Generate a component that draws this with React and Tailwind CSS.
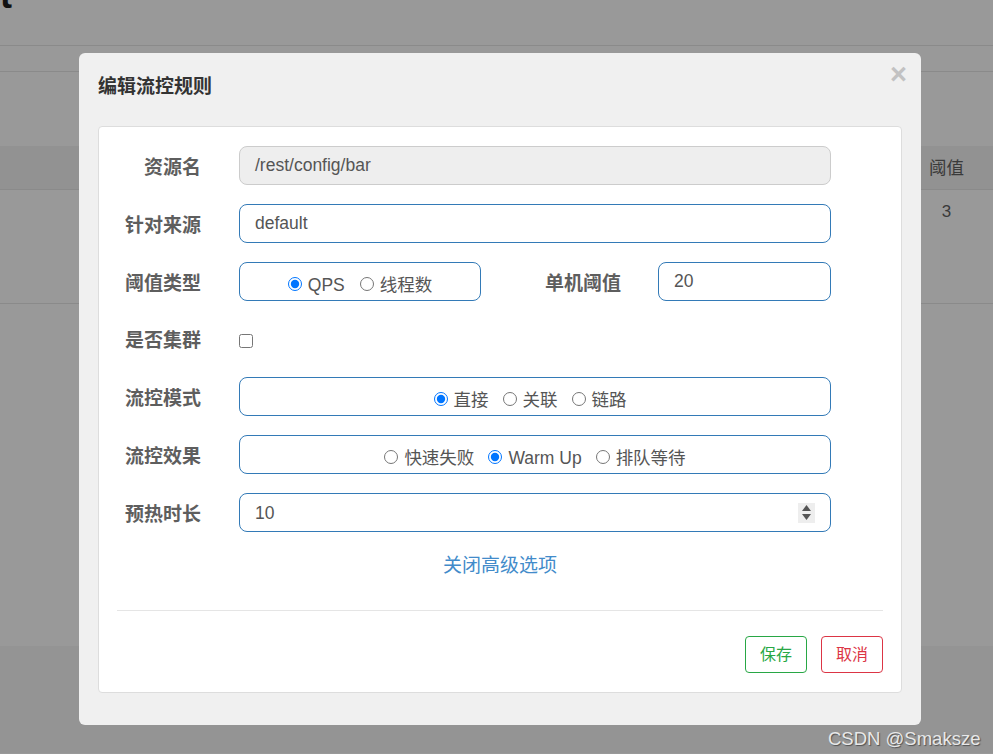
import React from "react";

const font = { fontFamily: '"Liberation Sans","Noto Sans CJK SC",sans-serif' };

function Radio({ checked, label }) {
  return (
    <label className="mt-[4px] flex items-center">
      <input type="radio" defaultChecked={checked} className="m-0 h-[14px] w-[14px]" />
      <span className="ml-[6px] mt-[3px] text-[17.5px] text-[#555]">{label}</span>
    </label>
  );
}

function Label({ children, w = "w-[102px]" }) {
  return (
    <div className={`${w} mt-[5px] shrink-0 text-right text-[19px] font-bold text-[#5e5e5e]`}>{children}</div>
  );
}

export default function App() {
  return (
    <div className="relative h-[754px] w-[993px] overflow-hidden bg-[#999999]" style={font}>
      {/* background page */}
      <div className="h-[45px] overflow-hidden">
        <div className="mt-[-22px] text-[36px] font-bold leading-[36px] text-[#111]">t</div>
      </div>
      <div className="h-[26px] border-t border-[#8a8a8a]" />
      <div className="h-[75px] border-t border-[#8a8a8a]" />
      <div className="flex h-[43px] items-center justify-end bg-[#929292]">
        <div className="w-[93px] pt-[2px] text-center text-[17.5px] text-[#3a3a3a]">阈值</div>
      </div>
      <div className="flex h-[114px] justify-end border-t border-[#8a8a8a]">
        <div className="w-[93px] pt-[9px] text-center text-[17px] text-[#3a3a3a]">3</div>
      </div>
      <div className="h-[343px] border-t border-[#8a8a8a]" />
      <div className="h-[107px] bg-[#949494]" />

      {/* modal */}
      <div className="absolute left-[79px] top-[53px] w-[842px] rounded-[6px] bg-[#f0f0f0] px-[19px] pb-[32px]">
        <div className="flex h-[73px] items-start justify-between pt-[8px]">
          <div className="mt-[15px] text-[19px] font-bold leading-[22px] text-[#333]">编辑流控规则</div>
          <div className="mr-[-5px] text-[29px] font-bold leading-[26px] text-[#c2c2c2]">×</div>
        </div>
        <div className="rounded-[4px] border border-[#dddddd] bg-white pt-[19px] pb-[19px]">
          <div className="flex flex-col gap-[19px]">
            <div className="flex h-[39px] items-center">
              <Label>资源名</Label>
              <div className="ml-[38px] flex h-[39px] w-[592px] items-center rounded-[8px] border border-[#cccccc] bg-[#eeeeee] pl-[15px] text-[17.5px] text-[#555]">
                /rest/config/bar
              </div>
            </div>
            <div className="flex h-[39px] items-center">
              <Label>针对来源</Label>
              <div className="ml-[38px] flex h-[39px] w-[592px] items-center rounded-[8px] border border-[#337ab7] bg-white pl-[15px] text-[17.5px] text-[#555]">
                default
              </div>
            </div>
            <div className="flex h-[39px] items-center">
              <Label>阈值类型</Label>
              <div className="ml-[38px] flex h-[39px] w-[242px] items-center justify-center gap-[15px] rounded-[8px] border border-[#337ab7] bg-white">
                <Radio checked label="QPS" />
                <Radio label="线程数" />
              </div>
              <Label w="w-[140px]">单机阈值</Label>
              <div className="ml-[37px] flex h-[39px] w-[173px] items-center rounded-[8px] border border-[#337ab7] bg-white pl-[15px] text-[17.5px] text-[#555]">
                20
              </div>
            </div>
            <div className="flex h-[38px] items-center">
              <Label>是否集群</Label>
              <input type="checkbox" className="m-0 ml-[38px] mt-[3px] h-[14px] w-[14px]" />
            </div>
            <div className="flex h-[39px] items-center">
              <Label>流控模式</Label>
              <div className="ml-[38px] flex h-[39px] w-[592px] items-center justify-center gap-[14px] rounded-[8px] border border-[#337ab7] bg-white pr-[10px]">
                <Radio checked label="直接" />
                <Radio label="关联" />
                <Radio label="链路" />
              </div>
            </div>
            <div className="flex h-[39px] items-center">
              <Label>流控效果</Label>
              <div className="ml-[38px] flex h-[39px] w-[592px] items-center justify-center gap-[14px] rounded-[8px] border border-[#337ab7] bg-white">
                <Radio label="快速失败" />
                <Radio checked label="Warm Up" />
                <Radio label="排队等待" />
              </div>
            </div>
            <div className="flex h-[39px] items-center">
              <Label>预热时长</Label>
              <div className="ml-[38px] flex h-[39px] w-[592px] items-center justify-between rounded-[8px] border border-[#337ab7] bg-white pl-[15px] pr-[15px] text-[17.5px] text-[#555]">
                <span className="mt-[1px]">10</span>
                <span className="flex h-[20px] w-[17px] flex-col items-center justify-center gap-[3px] bg-[#eeeeee]">
                  <svg width="9" height="6" viewBox="0 0 9 6"><path d="M4.5 0L9 6H0z" fill="#555" /></svg>
                  <svg width="9" height="6" viewBox="0 0 9 6"><path d="M0 0h9L4.5 6z" fill="#555" /></svg>
                </span>
              </div>
            </div>
          </div>
          <div className="mt-[21px] text-center text-[19px] leading-[26px] text-[#428bca]">关闭高级选项</div>
          <div className="mx-[18px] mt-[31px] border-t border-[#e5e5e5]" />
          <div className="mt-[25px] flex justify-end gap-[14px] pr-[18px]">
            <button className="h-[37px] w-[62px] rounded-[4px] border border-[#28a745] bg-white text-[16px] text-[#28a745]">保存</button>
            <button className="h-[37px] w-[62px] rounded-[4px] border border-[#dc3545] bg-white text-[16px] text-[#dc3545]">取消</button>
          </div>
        </div>
      </div>

      <div className="absolute left-[828px] top-[725px] text-[18.5px] text-[#e8e8e8] [text-shadow:1px_1px_1px_rgba(0,0,0,0.45)]">
        CSDN @Smaksze
      </div>
    </div>
  );
}
